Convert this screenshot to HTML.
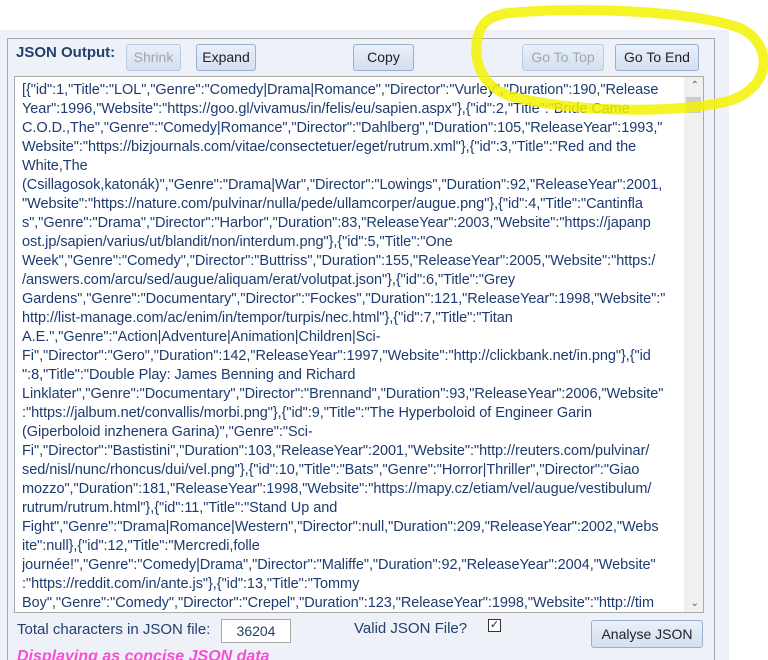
<!DOCTYPE html>
<html><head><meta charset="utf-8"><style>
*{box-sizing:border-box;margin:0;padding:0}
html,body{width:768px;height:660px;overflow:hidden}
body{background:#fff;font-family:"Liberation Sans","DejaVu Sans",sans-serif;position:relative}
.bg{position:absolute;left:0;top:30px;width:729px;height:630px;background:#eef1f7}
.panel{position:absolute;left:7px;top:38px;width:708px;height:622px;border:1px solid #a9a9a9;border-bottom:none;background:#eef1f7}
.lbl{position:absolute;left:16px;top:44px;font-weight:bold;font-size:15px;color:#24406e}
.btn{position:absolute;height:27px;border:1px solid #97b0d1;border-radius:3px;background:linear-gradient(#e9f0f9,#d3e0f1);font-size:14px;color:#222;text-align:center;line-height:25px}
.dis{color:#a0a6ad;border-color:#b9cbe3}
.ta{position:absolute;left:14px;top:76px;width:690px;height:537px;border:1px solid #a9a9a9;background:#fff;overflow:hidden}
.txt{position:absolute;left:7px;top:4px;width:662px;font-size:14.5px;line-height:19px;color:#1d3b70;white-space:nowrap;letter-spacing:-0.05px}
.txt div{overflow:hidden;height:19px}
.sb{position:absolute;right:0;top:0;width:19px;height:535px;background:#f0f0f0}
.thumb{position:absolute;right:2px;top:20px;width:15px;height:16px;background:#cdcdcd}
.ar{position:absolute;right:4px;font-size:10px;color:#555}
.t{position:absolute;font-size:15px;color:#24406e}
</style></head><body>
<div class="bg"></div>
<div class="panel"></div>
<div class="lbl">JSON Output:</div>
<div class="btn dis" style="left:126px;top:44px;width:55px">Shrink</div>
<div class="btn" style="left:196px;top:44px;width:60px">Expand</div>
<div class="btn" style="left:353px;top:44px;width:61px">Copy</div>
<div class="btn dis" style="left:522px;top:44px;width:82px">Go To Top</div>
<div class="btn" style="left:615px;top:44px;width:84px">Go To End</div>
<div class="ta">
<div class="txt">
<div>[{"id":1,"Title":"LOL","Genre":"Comedy|Drama|Romance","Director":"Vurley","Duration":190,"Release</div>
<div>Year":1996,"Website":"https://goo.gl/vivamus/in/felis/eu/sapien.aspx"},{"id":2,"Title":"Bride Came</div>
<div>C.O.D.,The","Genre":"Comedy|Romance","Director":"Dahlberg","Duration":105,"ReleaseYear":1993,"</div>
<div>Website":"https://bizjournals.com/vitae/consectetuer/eget/rutrum.xml"},{"id":3,"Title":"Red and the</div>
<div>White,The</div>
<div>(Csillagosok,katonák)","Genre":"Drama|War","Director":"Lowings","Duration":92,"ReleaseYear":2001,</div>
<div>"Website":"https://nature.com/pulvinar/nulla/pede/ullamcorper/augue.png"},{"id":4,"Title":"Cantinfla</div>
<div>s","Genre":"Drama","Director":"Harbor","Duration":83,"ReleaseYear":2003,"Website":"https://japanp</div>
<div>ost.jp/sapien/varius/ut/blandit/non/interdum.png"},{"id":5,"Title":"One</div>
<div>Week","Genre":"Comedy","Director":"Buttriss","Duration":155,"ReleaseYear":2005,"Website":"https:/</div>
<div>/answers.com/arcu/sed/augue/aliquam/erat/volutpat.json"},{"id":6,"Title":"Grey</div>
<div>Gardens","Genre":"Documentary","Director":"Fockes","Duration":121,"ReleaseYear":1998,"Website":"</div>
<div>http://list-manage.com/ac/enim/in/tempor/turpis/nec.html"},{"id":7,"Title":"Titan</div>
<div>A.E.","Genre":"Action|Adventure|Animation|Children|Sci-</div>
<div>Fi","Director":"Gero","Duration":142,"ReleaseYear":1997,"Website":"http://clickbank.net/in.png"},{"id</div>
<div>":8,"Title":"Double Play: James Benning and Richard</div>
<div>Linklater","Genre":"Documentary","Director":"Brennand","Duration":93,"ReleaseYear":2006,"Website"</div>
<div>:"https://jalbum.net/convallis/morbi.png"},{"id":9,"Title":"The Hyperboloid of Engineer Garin</div>
<div>(Giperboloid inzhenera Garina)","Genre":"Sci-</div>
<div>Fi","Director":"Bastistini","Duration":103,"ReleaseYear":2001,"Website":"http://reuters.com/pulvinar/</div>
<div>sed/nisl/nunc/rhoncus/dui/vel.png"},{"id":10,"Title":"Bats","Genre":"Horror|Thriller","Director":"Giao</div>
<div>mozzo","Duration":181,"ReleaseYear":1998,"Website":"https://mapy.cz/etiam/vel/augue/vestibulum/</div>
<div>rutrum/rutrum.html"},{"id":11,"Title":"Stand Up and</div>
<div>Fight","Genre":"Drama|Romance|Western","Director":null,"Duration":209,"ReleaseYear":2002,"Webs</div>
<div>ite":null},{"id":12,"Title":"Mercredi,folle</div>
<div>journée!","Genre":"Comedy|Drama","Director":"Maliffe","Duration":92,"ReleaseYear":2004,"Website"</div>
<div>:"https://reddit.com/in/ante.js"},{"id":13,"Title":"Tommy</div>
<div>Boy","Genre":"Comedy","Director":"Crepel","Duration":123,"ReleaseYear":1998,"Website":"http://tim</div>
</div>
<div class="sb"><div class="ar" style="top:3px">&#8963;</div><div class="thumb"></div><div class="ar" style="bottom:3px">&#8964;</div></div>
</div>
<div class="t" style="left:17px;top:621px">Total characters in JSON file:</div>
<div style="position:absolute;left:221px;top:619px;width:70px;height:24px;border:1px solid #a9a9a9;background:#fff;font-size:14px;color:#24406e;text-align:center;line-height:22px">36204</div>
<div class="t" style="left:354px;top:620px">Valid JSON File?</div>
<div style="position:absolute;left:488px;top:619px;width:13px;height:13px;border:1px solid #333;background:#fff;font-size:11px;line-height:11px;text-align:center;color:#222">&#10003;</div>
<div class="btn" style="left:591px;top:620px;width:112px;height:28px;line-height:26px">Analyse JSON</div>
<div style="position:absolute;left:17px;top:648px;font-size:16px;font-weight:bold;font-style:italic;color:#f74fd1">Displaying as concise JSON data</div>
<svg style="position:absolute;left:0;top:0" width="768" height="660"><path d="M500 14 C570 6 690 10 740 28 C775 45 772 90 725 102 C670 114 570 112 510 96 C475 84 472 50 480 30 C485 20 492 16 505 14" fill="none" stroke="#f2f200" stroke-width="10" opacity="0.85"/></svg>
</body></html>
